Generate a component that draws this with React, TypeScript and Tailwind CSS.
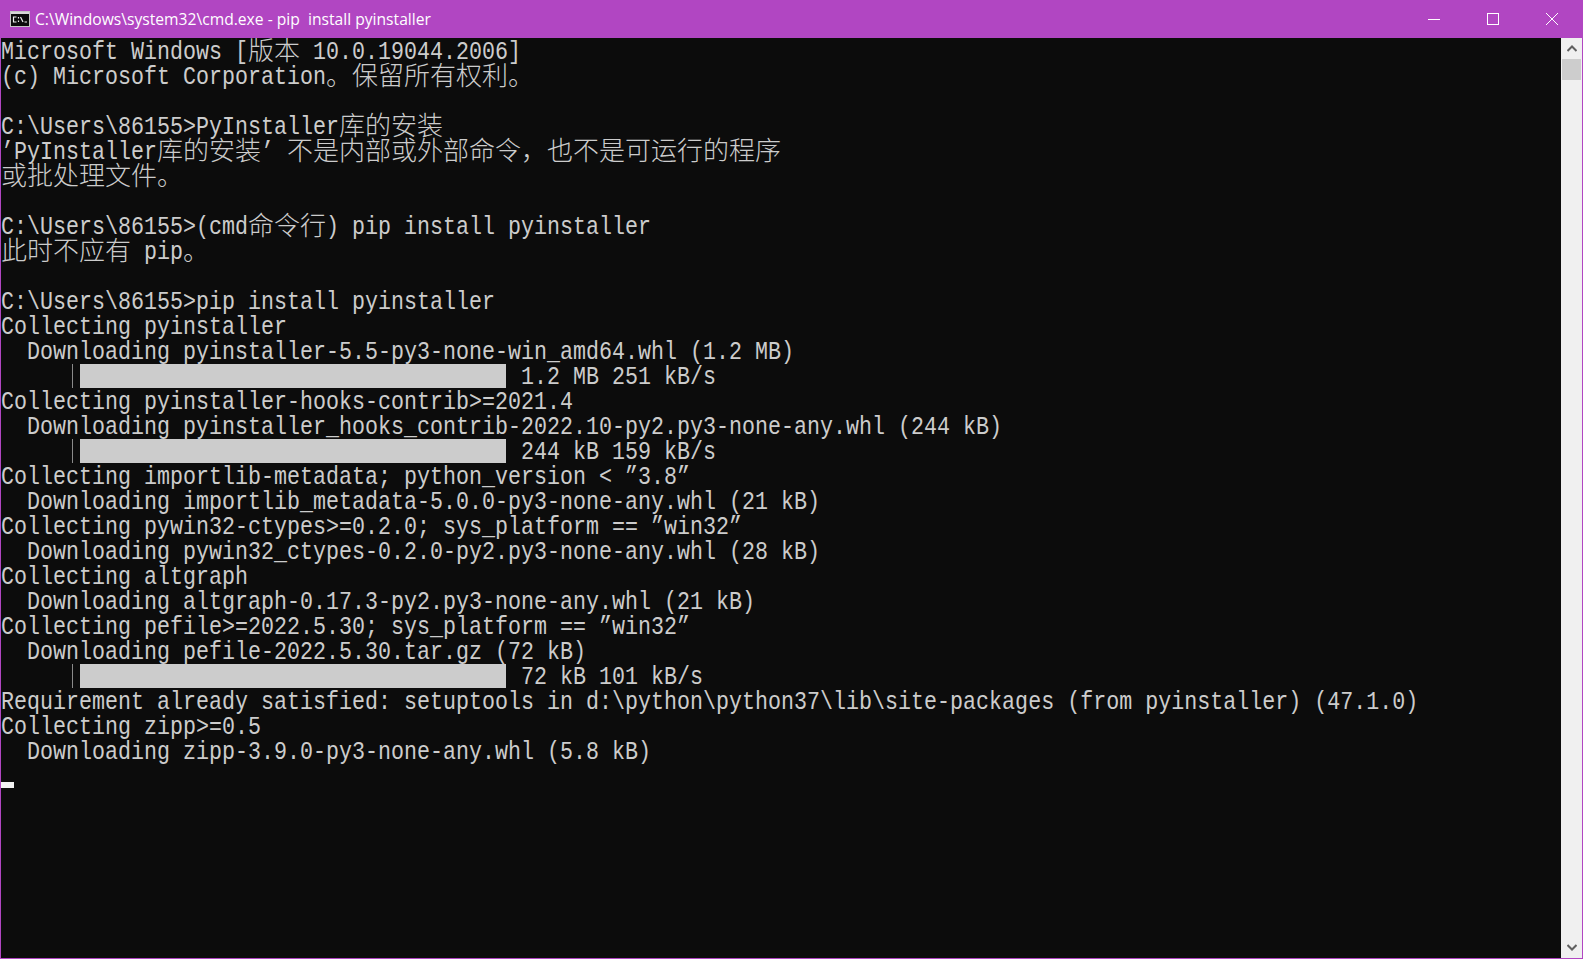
const Row = 'h-[25px] whitespace-pre flex items-start';

// half width runs are stretched tall and squeezed to the 13px console cell, full width runs take 26px
function ConsoleText({ text }: { text: string }) {
  const runs = text.match(/[\u3000-\u9fff\uff00-\uffef]+|[^\u3000-\u9fff\uff00-\uffef]+/g) ?? [];
  return (
    <>
      {runs.map((run, i) =>
        /^[\u3000-\u9fff\uff00-\uffef]/.test(run) ? (
          <span key={i} lang="zh-CN" className="font-['Noto_Sans_CJK_SC',sans-serif] text-[26px] leading-[21px] font-light shrink-0 h-[25px]">
            {run}
          </span>
        ) : (
          <span key={i} className="inline-block shrink-0 h-[25px]" style={{ width: run.length * 13 }}>
            <span className="inline-block origin-top-left scale-x-[0.8333] font-['Liberation_Mono',monospace] text-[26px] leading-[29px]">
              {run}
            </span>
          </span>
        )
      )}
    </>
  );
}

function Line({ text }: { text: string }) {
  return (
    <div className={Row}>
      <ConsoleText text={text} />
    </div>
  );
}

function Bar({ text }: { text: string }) {
  return (
    <div className={Row}>
      <div className="ml-[71px] mt-px w-px h-[24px] bg-[#8a8a8a]" />
      <div className="ml-[7px] mt-px w-[426px] h-[24px] bg-[#cccccc]" />
      <div className="ml-[15px] flex">
        <ConsoleText text={text} />
      </div>
    </div>
  );
}

const output: { t: string; bar?: boolean }[] = [
  { t: 'Microsoft Windows [版本 10.0.19044.2006]' },
  { t: '(c) Microsoft Corporation。保留所有权利。' },
  { t: '' },
  { t: 'C:\\Users\\86155>PyInstaller库的安装' },
  { t: '’PyInstaller库的安装’ 不是内部或外部命令，也不是可运行的程序' },
  { t: '或批处理文件。' },
  { t: '' },
  { t: 'C:\\Users\\86155>(cmd命令行) pip install pyinstaller' },
  { t: '此时不应有 pip。' },
  { t: '' },
  { t: 'C:\\Users\\86155>pip install pyinstaller' },
  { t: 'Collecting pyinstaller' },
  { t: '  Downloading pyinstaller-5.5-py3-none-win_amd64.whl (1.2 MB)' },
  { t: '1.2 MB 251 kB/s', bar: true },
  { t: 'Collecting pyinstaller-hooks-contrib>=2021.4' },
  { t: '  Downloading pyinstaller_hooks_contrib-2022.10-py2.py3-none-any.whl (244 kB)' },
  { t: '244 kB 159 kB/s', bar: true },
  { t: 'Collecting importlib-metadata; python_version < ”3.8”' },
  { t: '  Downloading importlib_metadata-5.0.0-py3-none-any.whl (21 kB)' },
  { t: 'Collecting pywin32-ctypes>=0.2.0; sys_platform == ”win32”' },
  { t: '  Downloading pywin32_ctypes-0.2.0-py2.py3-none-any.whl (28 kB)' },
  { t: 'Collecting altgraph' },
  { t: '  Downloading altgraph-0.17.3-py2.py3-none-any.whl (21 kB)' },
  { t: 'Collecting pefile>=2022.5.30; sys_platform == ”win32”' },
  { t: '  Downloading pefile-2022.5.30.tar.gz (72 kB)' },
  { t: '72 kB 101 kB/s', bar: true },
  { t: 'Requirement already satisfied: setuptools in d:\\python\\python37\\lib\\site-packages (from pyinstaller) (47.1.0)' },
  { t: 'Collecting zipp>=0.5' },
  { t: '  Downloading zipp-3.9.0-py3-none-any.whl (5.8 kB)' }
];

export default function App() {
  return (
    <div className="w-[1583px] h-[959px] overflow-hidden flex flex-col bg-[#b146c2]">
      <header className="h-[38px] shrink-0 flex items-center text-white">
        <svg width="20" height="16" viewBox="0 0 20 16" className="ml-[10px] shrink-0">
          <rect x="0.5" y="0.5" width="19" height="15" fill="#0c0c0c" stroke="#c4c4c4" />
          <rect x="1" y="1" width="18" height="2" fill="#d8d8d8" />
          <path d="M6.5 6H3.5V11H6.5M8.5 6V7.5M8.5 9.5V11M10.5 6L13 11M14.5 11H17" fill="none" stroke="#f0f0f0" strokeWidth="1.2" />
        </svg>
        <div className="ml-[5px] pt-px flex-1 whitespace-pre font-['Open_Sans',sans-serif] text-[15.65px]">
          C:\Windows\system32\cmd.exe - pip  install pyinstaller
        </div>
        <div className="flex items-center gap-px mr-[2px]">
          <div className="w-[58px] h-[38px] flex items-center justify-center">
            <div className="w-[12px] h-px bg-white" />
          </div>
          <div className="w-[58px] h-[38px] flex items-center justify-center">
            <div className="w-[12px] h-[12px] border border-white" />
          </div>
          <div className="w-[58px] h-[38px] flex items-center justify-center">
            <svg width="12" height="12" viewBox="0 0 12 12" stroke="white" strokeWidth="1">
              <path d="M0 0L12 12M12 0L0 12" />
            </svg>
          </div>
        </div>
      </header>
      <div className="flex-1 min-h-0 flex ml-px mr-px mb-px bg-[#0c0c0c]">
        <main className="flex-1 min-w-0 text-[#cccccc] overflow-hidden">
          {output.map((row, i) => (row.bar ? <Bar key={i} text={row.t} /> : <Line key={i} text={row.t} />))}
          <div className="h-[25px] flex items-end">
            <div className="w-[13px] h-[6px] bg-[#f2f2f2]" />
          </div>
        </main>
        <aside className="w-[21px] shrink-0 bg-[#f0f0f0] flex flex-col">
          <div className="h-[21px] flex items-center justify-center">
            <svg width="10" height="7" viewBox="0 0 10 7" fill="none" stroke="#606060" strokeWidth="2">
              <path d="M0.5 6L5 1.5L9.5 6" />
            </svg>
          </div>
          <div className="mx-px h-[21px] bg-[#cdcdcd]" />
          <div className="flex-1" />
          <div className="h-[21px] flex items-center justify-center">
            <svg width="10" height="7" viewBox="0 0 10 7" fill="none" stroke="#606060" strokeWidth="2">
              <path d="M0.5 1L5 5.5L9.5 1" />
            </svg>
          </div>
        </aside>
      </div>
    </div>
  );
}
